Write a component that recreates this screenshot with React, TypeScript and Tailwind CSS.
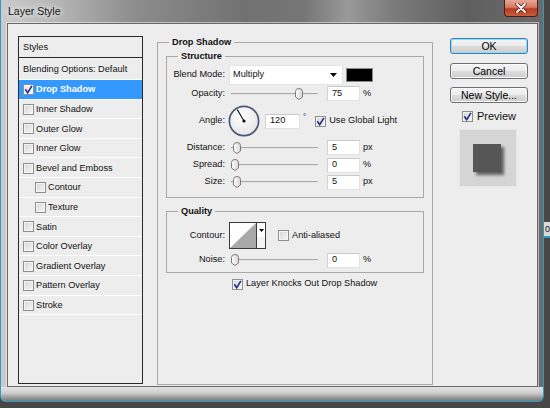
import React from "react";

const Check = ({ checked = false, className = "" }: { checked?: boolean; className?: string }) => (
  <span
    className={`flex h-[11px] w-[11px] shrink-0 items-center justify-center border border-[#8e8f8f] bg-[linear-gradient(135deg,#d4d4d4,#f9f9f9)] shadow-[inset_0_0_0_1px_#f4f4f4] ${className}`}
  >
    {checked && (
      <svg width="9" height="9" viewBox="0 0 9 9">
        <path d="M1.3 4.3 L3.7 7.7 L7.9 0.9" fill="none" stroke="#27348b" strokeWidth="1.7" />
      </svg>
    )}
  </span>
);

const Thumb = () => (
  <svg width="8" height="12" viewBox="0 0 8 12">
    <defs>
      <linearGradient id="thumbg" x1="0" x2="1" y1="0" y2="0">
        <stop offset="0" stopColor="#ffffff" />
        <stop offset="1" stopColor="#d6d6d6" />
      </linearGradient>
    </defs>
    <path d="M0.5 3.5 Q0.5 0.5 4 0.5 Q7.5 0.5 7.5 3.5 L7.5 9 L4 11.5 L0.5 9 Z" fill="url(#thumbg)" stroke="#7b7b7b" />
  </svg>
);

const Slider = ({ at }: { at: number }) => (
  <div className="relative flex h-[12px] w-[87px] items-center">
    <div className="h-[2px] w-full border-t border-[#a9a9a9] bg-[#e4e4e4]" />
    <div className="absolute top-0 flex" style={{ left: at }}>
      <Thumb />
    </div>
  </div>
);

const Field = ({ children, className = "" }: { children: React.ReactNode; className?: string }) => (
  <div
    className={`flex h-[15px] items-center border border-[#e2e2e2] border-t-[#c9c9c9] border-l-[#d2d2d2] bg-white pl-[4px] ${className}`}
  >
    {children}
  </div>
);

const Label = ({ children }: { children: React.ReactNode }) => (
  <span className="w-[58px] shrink-0 text-right">{children}</span>
);

const Arrow = () => (
  <svg width="7" height="4" viewBox="0 0 7 4">
    <path d="M0 0 H7 L3.5 4 Z" fill="#000" />
  </svg>
);

const SliderRow = ({ label, at, value, unit, className = "" }: { label: string; at: number; value: string; unit: string; className?: string }) => (
  <div className={`flex h-[16px] items-center ${className}`}>
    <Label>{label}</Label>
    <div className="ml-[6px]">
      <Slider at={at} />
    </div>
    <Field className="ml-[9px] w-[33px]">{value}</Field>
    <span className="ml-[3px]">{unit}</span>
  </div>
);

const Legend = ({ children }: { children: React.ReactNode }) => (
  <legend className="ml-[11px] px-[3px] font-bold leading-[12px]">{children}</legend>
);

type Item = { t: string; checked?: boolean; sel?: boolean; indent?: boolean };
const items: Item[] = [
  { t: "Drop Shadow", checked: true, sel: true },
  { t: "Inner Shadow" },
  { t: "Outer Glow" },
  { t: "Inner Glow" },
  { t: "Bevel and Emboss" },
  { t: "Contour", indent: true },
  { t: "Texture", indent: true },
  { t: "Satin" },
  { t: "Color Overlay" },
  { t: "Gradient Overlay" },
  { t: "Pattern Overlay" },
  { t: "Stroke" },
];

const Button = ({ children, primary = false, className = "" }: { children: React.ReactNode; primary?: boolean; className?: string }) => (
  <div
    className={`flex h-[16px] w-[78px] items-center justify-center rounded-[3px] border text-[10.5px] leading-none text-black bg-[linear-gradient(to_bottom,#f4f4f4_0%,#ececec_48%,#dcdcdc_52%,#cdcdcd_100%)] ${
      primary
        ? "border-[#3c7fb1] shadow-[inset_0_0_0_1px_#8fdcf6]"
        : "border-[#707070] shadow-[inset_0_0_0_1px_#fbfbfb]"
    } ${className}`}
  >
    {children}
  </div>
);

export default function App() {
  return (
    <div className="flex h-[408px] w-[550px] overflow-hidden bg-[#474747] font-['Liberation_Sans',Arial,sans-serif] text-[9.2px] text-[#111]">
      {/* window */}
      <div className="flex h-[402px] w-[544px] shrink-0 flex-col overflow-hidden rounded-b-[6px] border border-t-0 border-[#2d9cc2] bg-[linear-gradient(to_right,#cbcbcb_0%,#b6b6b6_10%,#8c8c8c_25%,#717171_45%,#767676_56%,#999999_64%,#7c7c7c_72%,#5f5f5f_86%,#6b6b6b_100%)]">
        {/* title bar */}
        <div className="flex h-[23px] shrink-0 items-start justify-between">
          <span className="ml-[7px] mt-[5px] text-[10.5px] leading-[12px] text-[#101010] [text-shadow:0_0_5px_#ffffff,0_0_8px_#ffffff]">
            Layer Style
          </span>
          <div className="mr-[5px] flex h-[17px] w-[34px] items-center justify-center rounded-b-[4px] border border-t-0 border-[#4d1d15] bg-[linear-gradient(to_bottom,#e7a999_0%,#d57c66_45%,#b93b22_55%,#c85c3e_100%)]">
            <svg width="12" height="10" viewBox="0 0 12 10">
              <path d="M2 1 L10 9 M10 1 L2 9" stroke="#5a2018" strokeWidth="3.4" strokeLinecap="round" />
              <path d="M2 1 L10 9 M10 1 L2 9" stroke="#ffffff" strokeWidth="1.8" strokeLinecap="round" />
            </svg>
          </div>
        </div>

        {/* body row */}
        <div className="flex flex-1 pl-[6px] pr-[5px]">
          <div className="flex h-[364px] flex-1 items-start border border-[#686868] bg-[#ededed] pl-[10px] pt-[12px] shadow-[0_0_0_1px_rgba(255,255,255,0.5)]">
            {/* left styles panel */}
            <div className="flex h-[348px] w-[125px] shrink-0 flex-col border border-[#2a2a2a]">
              <div className="flex h-[21px] shrink-0 items-center border-b border-[#2a2a2a] pl-[4px] pt-[2px]">Styles</div>
              <div className="flex h-[22px] shrink-0 items-center border-b border-white pl-[4px] pt-[2px]">Blending Options: Default</div>
              {items.map((it) => (
                <div
                  key={it.t}
                  className={`flex h-[19.6px] shrink-0 items-center border-b border-white pt-[1px] ${it.indent ? "pl-[16px]" : "pl-[4px]"} ${
                    it.sel ? "bg-[#3399ff] font-bold text-white" : ""
                  }`}
                >
                  <Check checked={it.checked} className={it.sel ? "bg-[linear-gradient(135deg,#e8e8e8,#ffffff)]" : ""} />
                  <span className="ml-[2px] pt-[1px]">{it.t}</span>
                </div>
              ))}
            </div>

            {/* Drop Shadow group */}
            <fieldset className="ml-[14px] h-[349px] w-[276px] shrink-0 border border-[#a9a9a9]">
              <Legend>Drop Shadow</Legend>
              <div className="px-[8px] pt-[2px]">
                <fieldset className="w-[258px] border border-[#a9a9a9] pb-[7px] pt-[3px]">
                  <Legend>Structure</Legend>
                  <div className="flex h-[20px] items-center">
                    <Label>Blend Mode:</Label>
                    <div className="ml-[4px] flex h-[20px] w-[114px] items-center justify-between border border-[#e4e4e4] bg-white pl-[3px] pr-[5px]">
                      <span>Multiply</span>
                      <Arrow />
                    </div>
                    <div className="ml-[3px] h-[14px] w-[27px] border border-[#8a8a8a] bg-black" />
                  </div>
                  <SliderRow label="Opacity:" at={64} value="75" unit="%" className="pt-[1px]" />
                  <div className="mt-[4px] flex h-[32px] items-center">
                    <Label>Angle:</Label>
                    <svg className="ml-[3px]" width="32" height="32" viewBox="0 0 32 32">
                      <defs>
                        <radialGradient id="dialg" cx="0.4" cy="0.35" r="0.75">
                          <stop offset="0" stopColor="#ffffff" />
                          <stop offset="1" stopColor="#e2e2e2" />
                        </radialGradient>
                      </defs>
                      <circle cx="16" cy="16" r="14.6" fill="url(#dialg)" stroke="#4a5877" strokeWidth="1.7" />
                      <line x1="16" y1="16" x2="9.3" y2="4.6" stroke="#111" strokeWidth="1.1" />
                      <circle cx="16" cy="16" r="1.6" fill="#111" />
                    </svg>
                    <Field className="ml-[5px] w-[35px]">120</Field>
                    <span className="ml-[3px] self-start pt-[6px] text-[8px]">°</span>
                    <Check checked className="ml-[9px]" />
                    <span className="ml-[3px]">Use Global Light</span>
                  </div>
                  <SliderRow label="Distance:" at={2} value="5" unit="px" className="mt-[2px] pt-[1px]" />
                  <SliderRow label="Spread:" at={0} value="0" unit="%" className="mt-[2px]" />
                  <SliderRow label="Size:" at={2} value="5" unit="px" className="mt-[1px]" />
                </fieldset>

                <fieldset className="mt-[7px] w-[258px] border border-[#a9a9a9] pb-[4px] pt-[5px]">
                  <Legend>Quality</Legend>
                  <div className="flex h-[27px] items-center">
                    <Label>Contour:</Label>
                    <div className="ml-[4px] flex h-[27px] w-[37px] border border-[#3a3a3a] bg-white">
                      <svg width="26" height="25" viewBox="0 0 26 25">
                        <path d="M0 25 L26 0 L26 25 Z" fill="#a8a8a8" />
                      </svg>
                      <div className="flex flex-1 flex-col border-l border-[#3a3a3a]">
                        <div className="flex h-[14px] items-center justify-center bg-white">
                          <svg width="5" height="3" viewBox="0 0 5 3">
                            <path d="M0 0 H5 L2.5 3 Z" fill="#000" />
                          </svg>
                        </div>
                        <div className="flex-1 bg-[#f3f3f3]" />
                      </div>
                    </div>
                    <Check className="ml-[12px]" />
                    <span className="ml-[3px]">Anti-aliased</span>
                  </div>
                  <SliderRow label="Noise:" at={0} value="0" unit="%" className="mt-[3px]" />
                </fieldset>

                <div className="mt-[4px] flex h-[14px] items-center pl-[66px]">
                  <Check checked />
                  <span className="ml-[3px]">Layer Knocks Out Drop Shadow</span>
                </div>
              </div>
            </fieldset>

            {/* right column */}
            <div className="ml-[17px] mt-[2px] flex w-[78px] shrink-0 flex-col">
              <Button primary>OK</Button>
              <Button className="mt-[9px]">Cancel</Button>
              <Button className="mt-[8px]">New Style...</Button>
              <div className="mt-[8px] flex h-[11px] items-center justify-center text-[11px]">
                <Check checked />
                <span className="ml-[4px] leading-none">Preview</span>
              </div>
              <div className="ml-[9px] mt-[7px] flex h-[58px] w-[58px] items-start border border-[#e6e6e6] bg-[#d5d5d5] pl-[13px] pt-[14px]">
                <div className="h-[28px] w-[28px] bg-[#565656] shadow-[3px_3px_3px_rgba(0,0,0,0.55)]" />
              </div>
            </div>
          </div>
        </div>

        {/* bottom frame */}
        <div className="h-[15px] shrink-0 bg-[linear-gradient(to_bottom,#e2e2e2_0%,#cfcfcf_40%,#9a9a9a_70%,#6f6f6f_100%)]" />
      </div>

      {/* background strip */}
      <div className="flex-1 pt-[222px]">
        <div className="h-[16px] overflow-hidden border-b-2 border-[#2d9cc2] bg-[#d9d9d9] pl-[1px] text-[9px] leading-[14px]">0</div>
      </div>
    </div>
  );
}
